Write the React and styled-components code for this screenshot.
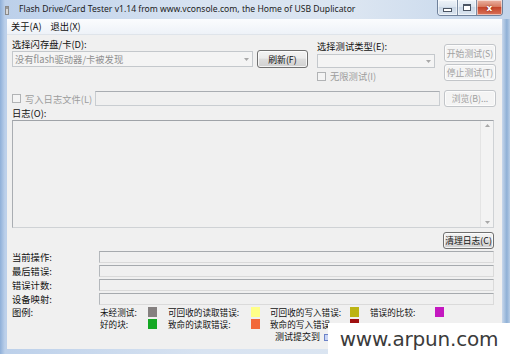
import React from 'react'
import styled, { createGlobalStyle } from 'styled-components'

const cjk = `"Noto Sans CJK SC", "Noto Sans", sans-serif`

const Global = createGlobalStyle`
  html, body { margin: 0; padding: 0; background: #fff; }
  body { width: 510px; height: 354px; overflow: hidden; font-family: ${cjk}; }
`

const Window = styled.div`
  position: relative;
  width: 510px;
  height: 354px;
  display: flex;
  flex-direction: column;
  overflow: hidden;
  background: linear-gradient(90deg, #8eafd8 0, #bcd0ea 5px, #d8e3f1 40%, #dbe5f1 70%, #c3d5eb 100%);
`

const TitleBar = styled.div`
  height: 19px;
  flex-shrink: 0;
  display: flex;
  align-items: flex-start;
`

const AppIcon = styled.svg`
  margin: 6px 0 0 5px;
  flex-shrink: 0;
`

const Title = styled.div`
  flex: 1;
  margin: 3px 0 0 10px;
  font-family: "Noto Sans", sans-serif;
  font-size: 8.6px;
  line-height: 12px;
  color: #1c1c1c;
  white-space: nowrap;
`

const Caption = styled.div`
  display: flex;
  height: 15px;
  margin-right: 7px;
  border: 1px solid #6f819b;
  border-top: none;
  border-radius: 0 0 4px 4px;
  overflow: hidden;
`

const CapBtn = styled.div`
  width: ${p => p.$w}px;
  display: flex;
  align-items: center;
  justify-content: center;
  border-left: ${p => (p.$first ? 'none' : '1px solid #7d8da3')};
  background: ${p =>
    p.$close
      ? 'linear-gradient(#eab3a3, #d77a60 45%, #c4452a 50%, #d9735a 100%)'
      : 'linear-gradient(#eef3f9, #dde6f0 45%, #cad7e6 50%, #dbe5f0 100%)'};
  box-shadow: inset 0 0 0 1px rgba(255, 255, 255, 0.55);
  color: #fff;
  font-family: "DejaVu Sans", sans-serif;
  font-size: 9px;
  font-weight: bold;
  text-shadow: 0 0 2px #7a1e0c;
`

const MinGlyph = styled.div`
  width: 7px;
  height: 2px;
  margin-top: 5px;
  background: #fff;
  border: 1px solid #4b5564;
`

const MaxGlyph = styled.div`
  width: 6px;
  height: 4px;
  border: 1px solid #4b5564;
  border-top-width: 2px;
  background: #fff;
`

const Body = styled.div`
  flex: 1;
  display: flex;
  min-height: 0;
`

const Client = styled.div`
  margin-left: 7px;
  width: 495px;
  display: flex;
  flex-direction: column;
  background: #f0f0f0;
`

const MenuBar = styled.div`
  height: 15px;
  display: flex;
  align-items: center;
  padding-left: 1px;
  background: linear-gradient(#fbfcfe, #eef2f8);
  border-bottom: 1px solid #dfe4ea;
`

const MenuItem = styled.span`
  padding: 0 4px 0 3px;
  font-size: 9.3px;
  line-height: 15px;
  color: #111;
  margin-right: 2px;
`

const Content = styled.div`
  flex: 1;
  padding: 0 6px 0 5px;
  display: flex;
  flex-direction: column;
  position: relative;
`

const Row = styled.div`
  display: flex;
  align-items: ${p => p.$align || 'flex-start'};
  margin-top: ${p => p.$mt || 0}px;
`

const Group = styled.div`
  display: flex;
  flex-direction: column;
  width: ${p => p.$w}px;
  margin-left: ${p => p.$ml || 0}px;
  margin-top: ${p => p.$mt || 0}px;
  gap: ${p => p.$gap || 0}px;
`

const Label = styled.div`
  font-size: 9.3px;
  line-height: ${p => p.$lh || 12}px;
  color: ${p => (p.$disabled ? '#9c9c9c' : '#111')};
  white-space: nowrap;
`

const Button = styled.div`
  box-sizing: border-box;
  width: ${p => p.$w}px;
  height: ${p => p.$h || 18}px;
  display: flex;
  align-items: center;
  justify-content: center;
  font-size: 8.8px;
  white-space: nowrap;
  color: ${p => (p.$disabled ? '#a0a0a0' : '#111')};
  border: 1px solid ${p => (p.$disabled ? '#c2c5c9' : '#707070')};
  border-radius: 3px;
  background: ${p =>
    p.$disabled
      ? '#f4f4f4'
      : 'linear-gradient(#f3f3f3 0%, #ebebeb 45%, #dddddd 50%, #d0d0d0 100%)'};
  box-shadow: inset 0 0 0 1px rgba(255, 255, 255, 0.75);
`

const Combo = styled.div`
  box-sizing: border-box;
  width: ${p => p.$w}px;
  height: ${p => p.$h}px;
  display: flex;
  align-items: center;
  border: 1px solid #c4c8cc;
  background: #f4f4f4;
  font-size: 9.3px;
  color: #8f8f8f;
  padding-left: 2px;
`

const ComboText = styled.span`
  flex: 1;
  white-space: nowrap;
  overflow: hidden;
`

const ComboArrow = styled.div`
  width: 11px;
  height: 100%;
  display: flex;
  align-items: center;
  justify-content: center;
`

const CheckRow = styled.div`
  display: flex;
  align-items: center;
  gap: 4px;
  width: ${p => p.$w || 'auto'};
`

const CheckBox = styled.div`
  box-sizing: border-box;
  width: 9px;
  height: 9px;
  border: 1px solid #b1b3b5;
  background: #f4f4f4;
  flex-shrink: 0;
`

const TextBox = styled.div`
  box-sizing: border-box;
  width: ${p => p.$w}px;
  height: ${p => p.$h}px;
  margin-right: ${p => p.$mr || 0}px;
  border: 1px solid #c9cdd1;
  border-top-color: #a9adb2;
  background: #f0f0f0;
`

const LogBox = styled.div`
  box-sizing: border-box;
  width: 482px;
  height: 108px;
  display: flex;
  justify-content: flex-end;
  border: 1px solid #cfd2d5;
  border-top-color: #9fa3a8;
  border-left-color: #a9adb2;
  background: #f0f0f0;
`

const ScrollBar = styled.div`
  width: 12px;
  display: flex;
  flex-direction: column;
  justify-content: space-between;
  align-items: center;
  padding: 3px 0;
  background: #f3f3f3;
  border-left: 1px solid #e4e4e4;
`

const InfoGrid = styled.div`
  display: grid;
  grid-template-columns: 87px 395px;
  grid-auto-rows: 12px;
  row-gap: 2px;
  margin-top: 2px;
  align-items: center;
`

const Field = styled.div`
  box-sizing: border-box;
  height: 12px;
  border: 1px solid #dadada;
  border-top-color: #a6aaae;
  border-left-color: #b4b8bc;
  background: #f0f0f0;
`

const LegendArea = styled.div`
  display: grid;
  grid-template-columns: 88px 1fr;
  margin-top: 1px;
`

const LegendGrid = styled.div`
  display: grid;
  grid-template-columns: 68px 102px 100px 75px;
  grid-auto-rows: 12px;
`

const LegendItem = styled.div`
  display: flex;
  align-items: center;
`

const LegendText = styled.span`
  width: ${p => p.$w}px;
  font-size: 8.6px;
  line-height: 12px;
  color: #111;
  white-space: nowrap;
`

const Swatch = styled.div`
  width: 9px;
  height: 10px;
  background: ${p => p.$c};
`

const SubmitRow = styled.div`
  display: flex;
  align-items: center;
  gap: 4px;
  margin: 1px 0 0 263px;
  font-size: 9px;
  line-height: 12px;
  color: #111;
`

const RightFrame = styled.div`
  flex: 1;
  background: linear-gradient(90deg, #c9d8eb, #8fb0d6 60%, #b8cde6);
`

const BottomFrame = styled.div`
  height: 5px;
  flex-shrink: 0;
`

const Watermark = styled.div`
  position: absolute;
  right: 0;
  bottom: 0;
  width: 182px;
  height: 31px;
  background: #fff;
  display: flex;
  align-items: center;
  justify-content: center;
  font-family: "DejaVu Sans", sans-serif;
  font-size: 20px;
  color: #3b3b3b;
  letter-spacing: -0.2px;
`

const Arrow = ({ up }) => (
  <svg width="5" height="3" viewBox="0 0 5 3">
    <path d={up ? 'M0 3 L2.5 0 L5 3 Z' : 'M0 0 L2.5 3 L5 0 Z'} fill="#a8a8a8" />
  </svg>
)

const legend = [
  [
    { t: '未经测试:', w: 48, c: '#858080' },
    { t: '可回收的读取错误:', w: 83, c: '#ffff88' },
    { t: '可回收的写入错误:', w: 80, c: '#bcb414' },
    { t: '错误的比较:', w: 65, c: '#c418c0' },
  ],
  [
    { t: '好的块:', w: 48, c: '#14a824' },
    { t: '致命的读取错误:', w: 83, c: '#f2683a' },
    { t: '致命的写入错误:', w: 80, c: '#a01010' },
  ],
]

export default function App() {
  return (
    <Window>
      <Global />
      <TitleBar>
        <AppIcon width="4" height="9" viewBox="0 0 4 9">
          <rect x="0.5" y="0.5" width="3" height="8" fill="#d8d8d8" stroke="#8a8a8a" />
          <rect x="1" y="1" width="2" height="2" fill="#9a9a9a" />
        </AppIcon>
        <Title>Flash Drive/Card Tester v1.14 from www.vconsole.com, the Home of USB Duplicator</Title>
        <Caption>
          <CapBtn $w={19} $first>
            <MinGlyph />
          </CapBtn>
          <CapBtn $w={18}>
            <MaxGlyph />
          </CapBtn>
          <CapBtn $w={25} $close>x</CapBtn>
        </Caption>
      </TitleBar>

      <Body>
        <Client>
          <MenuBar>
            <MenuItem>关于(A)</MenuItem>
            <MenuItem>退出(X)</MenuItem>
          </MenuBar>

          <Content>
            <Row $mt={4}>
              <Group $w={296}>
                <Label $lh={11}>选择闪存盘/卡(D):</Label>
                <Row $align="center">
                  <Combo $w={241} $h={16}>
                    <ComboText>没有flash驱动器/卡被发现</ComboText>
                    <ComboArrow>
                      <Arrow />
                    </ComboArrow>
                  </Combo>
                  <Group $w={4} />
                  <Button $w={51} $h={18}>刷新(F)</Button>
                </Row>
              </Group>

              <Group $w={118} $ml={9} $mt={1} $gap={2}>
                <Label>选择测试类型(E):</Label>
                <Combo $w={118} $h={14}>
                  <ComboText />
                  <ComboArrow>
                    <Arrow />
                  </ComboArrow>
                </Combo>
                <CheckRow>
                  <CheckBox />
                  <Label $disabled>无限测试(I)</Label>
                </CheckRow>
              </Group>

              <Group $w={52} $ml={9} $mt={5} $gap={2}>
                <Button $w={52} $h={18} $disabled>开始测试(S)</Button>
                <Button $w={52} $h={17} $disabled>停止测试(T)</Button>
              </Group>
            </Row>

            <Row $mt={8} $align="center">
              <CheckRow $w="83px">
                <CheckBox />
                <Label $disabled>写入日志文件(L)</Label>
              </CheckRow>
              <TextBox $w={345} $h={15} $mr={4} />
              <Button $w={52} $h={17} $disabled>浏览(B)...</Button>
            </Row>

            <Label $lh={13}>日志(O):</Label>
            <LogBox>
              <ScrollBar>
                <Arrow up />
                <Arrow />
              </ScrollBar>
            </LogBox>

            <Row $mt={4}>
              <Group $w={431} />
              <Button $w={51} $h={17}>清理日志(C)</Button>
            </Row>

            <InfoGrid>
              <Label>当前操作:</Label>
              <Field />
              <Label>最后错误:</Label>
              <Field />
              <Label>错误计数:</Label>
              <Field />
              <Label>设备映射:</Label>
              <Field />
            </InfoGrid>

            <LegendArea>
              <Label $lh={12}>图例:</Label>
              <LegendGrid>
                {legend.map((row, i) =>
                  row.map(item => (
                    <LegendItem key={i + item.t}>
                      <LegendText $w={item.w}>{item.t}</LegendText>
                      <Swatch $c={item.c} />
                    </LegendItem>
                  ))
                )}
              </LegendGrid>
            </LegendArea>

            <SubmitRow>
              测试提交到
              <svg width="7" height="7" viewBox="0 0 7 7">
                <rect x="0.5" y="0.5" width="6" height="6" fill="#c8d4f4" stroke="#6c82c8" />
              </svg>
            </SubmitRow>
          </Content>
        </Client>
        <RightFrame />
      </Body>
      <BottomFrame />

      <Watermark>www.arpun.com</Watermark>
    </Window>
  )
}
